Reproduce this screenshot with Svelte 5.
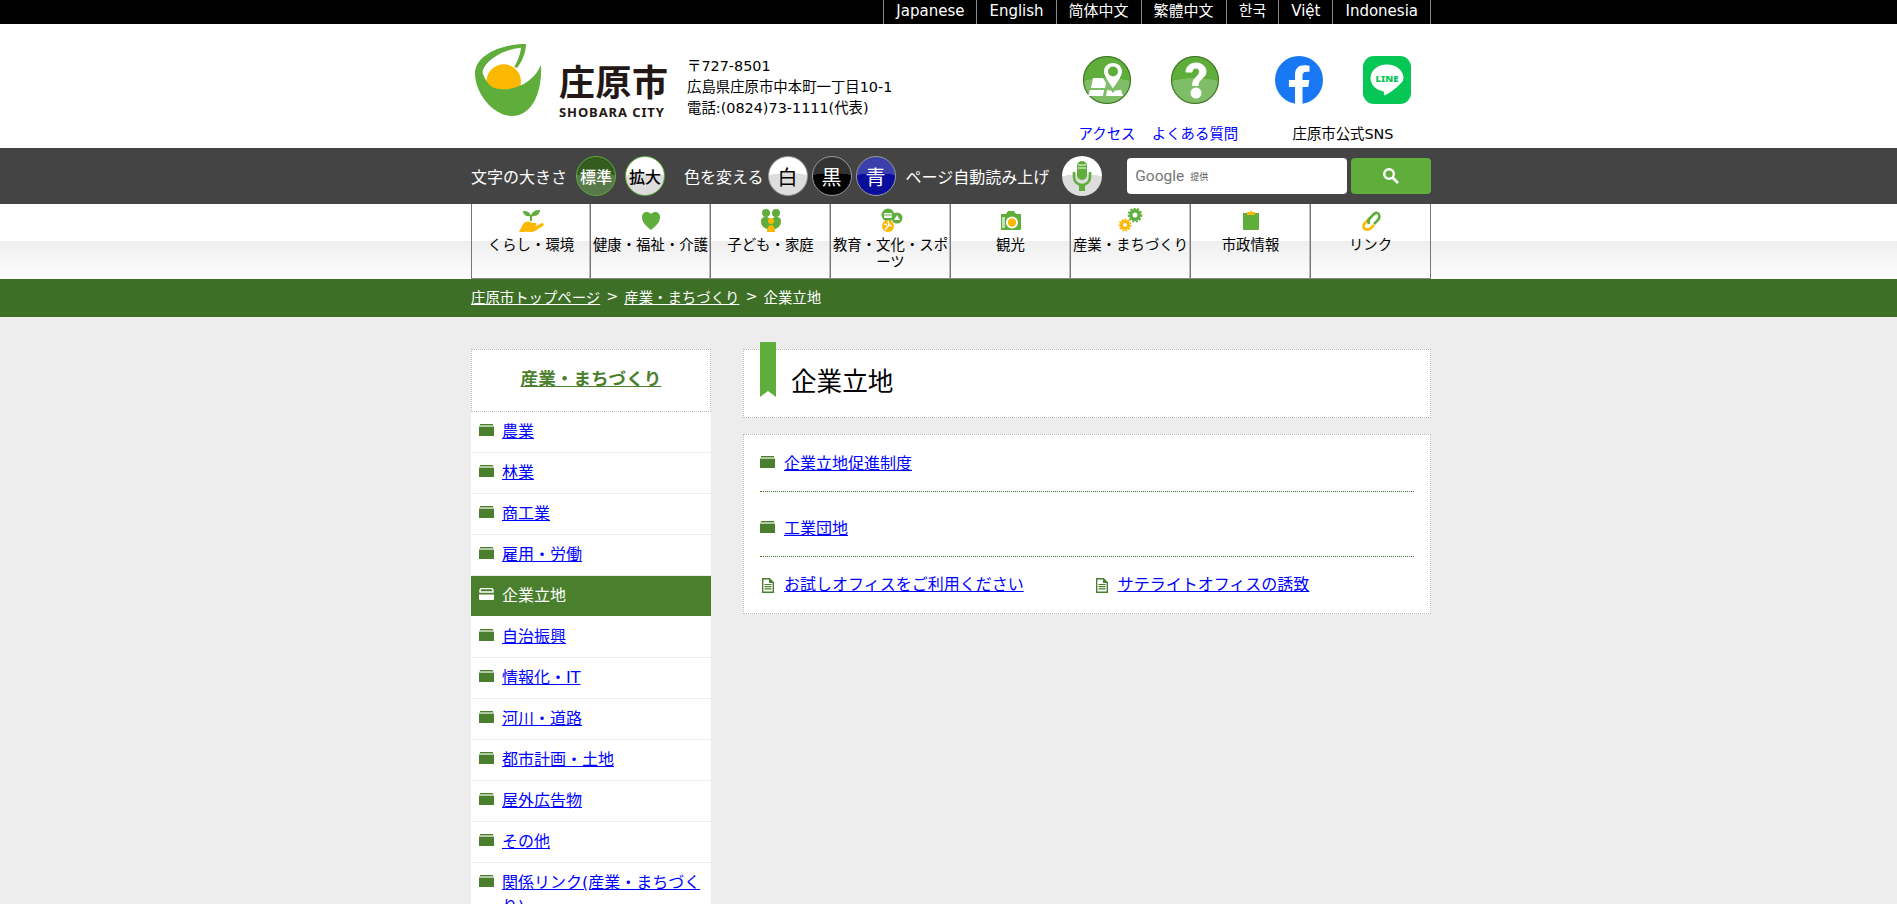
<script>
	const langs = ['Japanese', 'English', '简体中文', '繁體中文', '한국', 'Việt', 'Indonesia'];
	const nav = [
		{ id: 'life', label: 'くらし・環境' },
		{ id: 'health', label: '健康・福祉・介護' },
		{ id: 'kids', label: '子ども・家庭' },
		{ id: 'edu', label: '教育・文化・スポーツ' },
		{ id: 'camera', label: '観光' },
		{ id: 'gear', label: '産業・まちづくり' },
		{ id: 'clip', label: '市政情報' },
		{ id: 'link', label: 'リンク' }
	];
	const side = ['農業', '林業', '商工業', '雇用・労働', '企業立地', '自治振興', '情報化・IT', '河川・道路', '都市計画・土地', '屋外広告物', 'その他', '関係リンク(産業・まちづくり)'];
</script>

{#snippet folder(white)}
	<svg class="folder" width="15" height="12" viewBox="0 0 15 12">
		{#if white}
			<path d="M2 .5h11l1 1.500v2H1V2z" fill="none" stroke="#fff" stroke-width="1.400"/>
			<path d="M0 6.500h15V11a1 1 0 0 1-1 1H1a1 1 0 0 1-1-1z" fill="#fff"/>
		{:else}
			<path d="M1 0h13v1.500H1z" fill="#4a7f2d"/>
			<path d="M0 1.500h15v1.500H0z" fill="#b5cca8"/>
			<path d="M0 3h15v9H0z" fill="#4a7f2d"/>
		{/if}
	</svg>
{/snippet}

{#snippet doc()}
	<svg class="doc" width="12" height="15" viewBox="0 0 12 15">
		<path d="M.7.7h6.800l3.800 3.800v9.800H.7z" fill="#fff" stroke="#4a7f2d" stroke-width="1.400"/>
		<path d="M7 .7V5h4.500z" fill="#4a7f2d"/>
		<path d="M2.500 6.500h7M2.500 8.700h7M2.500 10.900h7" stroke="#4a7f2d" stroke-width="1.200"/>
	</svg>
{/snippet}

{#snippet navIcon(id)}
	<svg class="nav-icon" width="36" height="24" viewBox="0 0 36 24">
		{#if id === 'life'}
			<path d="M18 13V7" stroke="#5fad3b" stroke-width="2"/>
			<path d="M18 8C17 4 14 3 10 3c0 4 4 6 8 5zM18 8c1-5 5-6 9-6 0 4-4 7-9 6z" fill="#5fad3b"/>
			<path d="M6 24l4-8c3-3 6-3 9-1h4c1 1 0 3-1 3h-5 6l6-3c2 0 2 2 1 3l-8 5c-4 2-9 0-11 1z" fill="#fbb800"/>
		{:else if id === 'health'}
			<path d="M18 22C10 16 9 12 9 9c0-3 2-5 5-5 2 0 3 1 4 2 1-1 2-2 4-2 3 0 5 2 5 5 0 3-1 7-9 13z" fill="#5fad3b"/>
		{:else if id === 'kids'}
			<circle cx="13" cy="5" r="4" fill="#5fad3b"/><circle cx="23" cy="5" r="4" fill="#5fad3b"/>
			<path d="M8 13c0-3 2-4 5-4s3 2 5 2 2-2 5-2 5 1 5 4c0 5-3 8-10 9-7-1-10-4-10-9z" fill="#5fad3b"/>
			<circle cx="18" cy="13" r="3" fill="#fbb800"/>
			<path d="M14 24c0-5 2-7 4-7s4 2 4 7z" fill="#fbb800"/>
		{:else if id === 'edu'}
			<circle cx="15" cy="7" r="6.500" fill="#5fad3b"/><path d="M11 5h8v5h-8z" fill="#fff"/><path d="M11 7h8" stroke="#5fad3b"/>
			<circle cx="24" cy="10" r="5.500" fill="#5fad3b"/><path d="M24 7l3 5h-6z" fill="#fff"/>
			<circle cx="15" cy="18" r="6" fill="#fbb800"/><path d="M15 13l1 4 3 1M16 17l-4 5M14 17l-3-1" stroke="#fff" stroke-width="1.400" fill="none"/>
		{:else if id === 'camera'}
			<path d="M8 6h5l2-3h6l2 3h5v15a1 1 0 0 1-1 1H8z" fill="#5fad3b"/>
			<path d="M9 9h3v11H9z" fill="#c5e0b6"/>
			<circle cx="19" cy="14.500" r="6" fill="#fff"/><circle cx="19" cy="14.500" r="4.200" fill="#fbb800"/>
		{:else if id === 'gear'}
			<circle cx="22" cy="7" r="4.200" fill="none" stroke="#5fad3b" stroke-width="3.400"/>
			<circle cx="22" cy="7" r="6.400" fill="none" stroke="#5fad3b" stroke-width="2" stroke-dasharray="2 1.500"/>
			<circle cx="12" cy="17" r="3.500" fill="none" stroke="#fbb800" stroke-width="3"/>
			<circle cx="12" cy="17" r="5.500" fill="none" stroke="#fbb800" stroke-width="1.800" stroke-dasharray="1.800 1.300"/>
		{:else if id === 'clip'}
			<path d="M10 5h16v16a1 1 0 0 1-1 1H11a1 1 0 0 1-1-1z" fill="#5fad3b"/>
			<path d="M14 4h3l1-2 1 2h3v3h-8z" fill="#fbb800"/>
		{:else}
			<path d="M17 10l-5 5c-2 2-2 5 0 6s4 1 6-1l3-3" fill="none" stroke="#fbb800" stroke-width="2.600"/>
			<path d="M16 16c-1-2-1-4 1-6l4-4c2-2 5-1 5 1 1 2 0 4-2 6l-3 3" fill="none" stroke="#5fad3b" stroke-width="2.600"/>
		{/if}
	</svg>
{/snippet}

<div class="page">
	<div class="topbar">
		<ul class="langs">
			{#each langs as lang}
				<li>{lang}</li>
			{/each}
		</ul>
	</div>

	<header class="inner header">
		<div class="logo">
			<svg width="70" height="76" viewBox="30 36 210 228">
				<circle cx="116" cy="155" r="52" fill="#fbb800"/>
				<path d="M183 42C110 42 30 75 30 130c0 60 55 128 110 128 60 0 92-68 88-154-16 41-58 72-113 74-30 0-47-8-62-48-2-30 55-72 115-77-3 25-13 45-20 57l8 4c16-21 27-46 27-74z" fill="#5fad3b"/>
			</svg>
			<div class="logo-text">
				<span class="logo-ja">庄原市</span>
				<span class="logo-en">SHOBARA CITY</span>
			</div>
		</div>
		<address class="addr">
			<span>〒727-8501</span>
			<span>広島県庄原市中本町一丁目10-1</span>
			<span>電話:(0824)73-1111(代表)</span>
		</address>
		<div class="hlinks">
			<a class="hlink access" href="#a">
				<span class="gloss">
					<svg width="48" height="48" viewBox="0 0 48 48">
						<path d="M30 7c-5.500 0-9 4-9 8.500 0 5 6 12 9 17 3-5 9-12 9-17C39 11 35.500 7 30 7z" fill="#fff"/>
						<circle cx="30" cy="15.500" r="5" fill="#5fad3b"/>
						<path d="M10 22h10l3 5-1 5H8zM7 34h14l-1 6H5zM24 34l4 .5 2 2.500 2-2.500 6-.5 2 6H23z" fill="#fff"/>
					</svg>
				</span>
				<span class="hlabel">アクセス</span>
			</a>
			<a class="hlink faq" href="#f">
				<span class="gloss">
					<svg width="48" height="48" viewBox="0 0 48 48">
						<path d="M15 16c0-5 4-9 10-9s10 4 10 8.500c0 7-8 7-8 14h-5.500c0-8 7-9 7-14 0-2-1.500-3.500-3.500-3.500s-3.800 1.500-4 4z" fill="#fff" stroke="#fff"/>
						<circle cx="25" cy="37" r="5.500" fill="#fff"/>
					</svg>
				</span>
				<span class="hlabel">よくある質問</span>
			</a>
			<div class="sns">
				<div class="sns-icons">
					<svg width="48" height="48" viewBox="0 0 48 48">
						<circle cx="24" cy="24" r="24" fill="#1877f2"/>
						<path d="M33.300 31l1-7H27.500v-4.500c0-1.900 1-3.800 4-3.800h3v-6s-2.800-.5-5.400-.5c-5.500 0-9.100 3.300-9.100 9.400V24h-6.100v7H20v16.700a24 24 0 0 0 7.500 0V31z" fill="#fff"/>
					</svg>
					<svg width="48" height="48" viewBox="0 0 48 48">
						<rect width="48" height="48" rx="11" fill="#06c755"/>
						<path d="M24 8.500c-9.500 0-16.500 6-16.500 13.500 0 6.500 5.200 12 12.500 13.200 1.500.3 1 1.800.8 3-.1 1 .4 1.500 1.700.9 2-1 9-5.300 12.500-9 3-2.800 5.500-5 5.500-8.100C40.500 14.500 33.500 8.500 24 8.500z" fill="#fff"/>
						<text class="line-text" x="24" y="25.500" text-anchor="middle">LINE</text>
					</svg>
				</div>
				<span class="hlabel dark">庄原市公式SNS</span>
			</div>
		</div>
	</header>

	<div class="toolbar">
		<div class="inner tools">
			<span class="tool-label">文字の大きさ</span>
			<span class="ball ball-std">標準</span>
			<span class="ball ball-big">拡大</span>
			<span class="tool-label color-label">色を変える</span>
			<span class="ball ball-white">白</span>
			<span class="ball ball-black">黒</span>
			<span class="ball ball-blue">青</span>
			<span class="tool-label read-label">ページ自動読み上げ</span>
			<span class="ball ball-mic">
				<svg width="40" height="40" viewBox="0 0 40 40">
					<rect x="15" y="5" width="10" height="19" rx="5" fill="#5fad3b"/>
					<path d="M16 9h8M16 12h8" stroke="#fff" stroke-width="1"/>
					<path d="M12 16v5c0 5 4 8 8 8s8-3 8-8v-5" fill="none" stroke="#5fad3b" stroke-width="2.600"/>
					<path d="M17 29h6v6h-6z" fill="#5fad3b"/>
				</svg>
			</span>
			<div class="search">
				<div class="search-box"><span class="goog">Google</span><span class="teikyo">提供</span></div>
				<button class="search-btn" aria-label="検索">
					<svg width="18" height="18" viewBox="0 0 18 18">
						<circle cx="7" cy="7" r="4.800" fill="none" stroke="#fff" stroke-width="2.400"/>
						<path d="M10.500 10.500L16 16" stroke="#fff" stroke-width="2.600"/>
					</svg>
				</button>
			</div>
		</div>
	</div>

	<nav class="gnav">
		<ul class="inner gnav-list">
			{#each nav as item}
				<li>
					{@render navIcon(item.id)}
					<span>{item.label}</span>
				</li>
			{/each}
		</ul>
	</nav>

	<div class="crumbs">
		<div class="inner crumb-row">
			<a href="#t">庄原市トップページ</a><span class="sep">&gt;</span><a href="#s">産業・まちづくり</a><span class="sep">&gt;</span><span>企業立地</span>
		</div>
	</div>

	<div class="inner columns">
		<aside class="sidebar">
			<h2 class="side-title"><a href="#s">産業・まちづくり</a></h2>
			<ul class="side-list">
				{#each side as name}
					<li class:active={name === '企業立地'}>
						{@render folder(name === '企業立地')}
						{#if name === '企業立地'}
							<span>{name}</span>
						{:else}
							<a href="#n">{name}</a>
						{/if}
					</li>
				{/each}
			</ul>
		</aside>

		<main class="main">
			<div class="heading">
				<svg class="ribbon" width="16" height="55" viewBox="0 0 16 55"><path d="M0 0h16v55l-8-6-8 6z" fill="#5fad3b"/></svg>
				<h1>企業立地</h1>
			</div>
			<div class="box">
				<div class="row">{@render folder(false)}<a href="#p">企業立地促進制度</a></div>
				<div class="row">{@render folder(false)}<a href="#k">工業団地</a></div>
				<div class="docs">
					<div class="doc-item">{@render doc()}<a href="#o">お試しオフィスをご利用ください</a></div>
					<div class="doc-item">{@render doc()}<a href="#r">サテライトオフィスの誘致</a></div>
				</div>
			</div>
		</main>
	</div>
</div>

<style>
	:global(body) {
		margin: 0;
		background: #ededed;
	}
	.page {
		height: 904px;
		overflow: hidden;
		font-family: "DejaVu Sans", "Noto Sans CJK JP", sans-serif;
		font-size: 16px;
		color: #000;
	}
	.inner {
		width: 960px;
		margin-left: 471px;
		box-sizing: border-box;
	}
	a {
		color: #00f;
	}
	ul {
		list-style: none;
		margin: 0;
		padding: 0;
	}

	.topbar {
		background: #000;
		height: 24px;
	}
	.langs {
		display: flex;
		justify-content: flex-end;
		width: 960px;
		margin-left: 471px;
		height: 24px;
		border-right: 1px solid #888;
		box-sizing: border-box;
	}
	.langs li {
		border-left: 1px solid #888;
		color: #fff;
		font-size: 15px;
		line-height: 22px;
		padding: 0 12px;
	}

	.header {
		display: flex;
		height: 124px;
		position: relative;
	}
	.header::before {
		content: '';
		position: absolute;
		top: 0;
		bottom: 0;
		left: -471px;
		width: 1897px;
		background: #fff;
	}
	.header > * {
		position: relative;
	}
	.logo {
		display: flex;
		width: 216px;
		padding: 18px 0 0 4px;
		box-sizing: border-box;
		color: #231815;
	}
	.logo svg {
		flex-shrink: 0;
	}
	.logo-text {
		display: flex;
		flex-direction: column;
		margin-left: 14px;
		padding-top: 19px;
	}
	.logo-ja {
		font-family: "Noto Sans CJK JP", sans-serif;
		font-size: 36px;
		font-weight: 700;
		line-height: 38px;
		white-space: nowrap;
		letter-spacing: 0.5px;
	}
	.logo-en {
		font-family: "Noto Sans", sans-serif;
		font-size: 13px;
		font-weight: 700;
		line-height: 16px;
		white-space: nowrap;
		letter-spacing: 0.9px;
		margin-top: 5px;
	}
	.addr {
		display: flex;
		flex-direction: column;
		font-style: normal;
		font-size: 14.400px;
		line-height: 21px;
		padding-top: 32px;
		width: 370px;
		box-sizing: border-box;
	}
	.hlinks {
		display: flex;
		align-items: flex-start;
		padding-top: 32px;
	}
	.hlink {
		display: flex;
		flex-direction: column;
		align-items: center;
		text-decoration: none;
		width: 88px;
		flex-shrink: 0;
	}
	.access {
		margin-left: 6px;
	}
	.gloss {
		display: block;
		width: 48px;
		height: 48px;
		border-radius: 50%;
		box-sizing: border-box;
		box-shadow: inset 0 0 0 1px #3e6f26;
		background: radial-gradient(ellipse 50px 26px at 50% 100%, #7fbd67 99%, #5fad3b 100%);
	}
	.gloss svg {
		display: block;
	}
	.hlabel {
		font-size: 14.400px;
		line-height: 20px;
		margin-top: 20px;
		white-space: nowrap;
	}
	.hlabel.dark {
		color: #000;
	}
	.sns {
		display: flex;
		flex-direction: column;
		align-items: center;
		margin-left: 36px;
	}
	.sns-icons {
		display: flex;
		gap: 40px;
	}
	.line-text {
		font-family: "Noto Sans", sans-serif;
		font-size: 9.500px;
		font-weight: 900;
		fill: #06c755;
	}

	.toolbar {
		background: #444;
		height: 56px;
	}
	.tools {
		display: flex;
		align-items: center;
		height: 56px;
		color: #fff;
	}
	.tool-label {
		font-size: 16px;
		white-space: nowrap;
	}
	.color-label {
		margin-left: 19px;
		margin-right: 4px;
	}
	.read-label {
		margin-left: 6px;
		margin-right: 13px;
	}
	.ball {
		display: flex;
		align-items: center;
		justify-content: center;
		width: 40px;
		height: 40px;
		border-radius: 50%;
		box-sizing: border-box;
		flex-shrink: 0;
		font-size: 20px;
		border: 1px solid #999;
		color: #000;
		background: radial-gradient(ellipse 46px 22px at 50% 100%, #ddd 99%, #fff 100%);
		margin-right: 4px;
	}
	.ball-std, .ball-big {
		font-size: 16px;
		font-weight: 500;
		border-color: #5fad3b;
		margin-left: 9px;
		margin-right: 0;
	}
	.ball-std {
		color: #fff;
		background: radial-gradient(ellipse 46px 22px at 50% 100%, #587a4b 99%, #335c1e 100%);
	}
	.ball-black {
		color: #fff;
		background: radial-gradient(ellipse 46px 22px at 50% 100%, #000 99%, #333 100%);
	}
	.ball-blue {
		color: #fff;
		background: radial-gradient(ellipse 46px 22px at 50% 100%, #0b0e9c 99%, #3a3fac 100%);
	}
	.ball-mic {
		border: none;
		margin-right: 0;
	}
	.ball-mic svg {
		display: block;
	}
	.search {
		display: flex;
		gap: 4px;
		margin-left: 25px;
	}
	.search-box {
		display: flex;
		align-items: center;
		width: 220px;
		height: 36px;
		box-sizing: border-box;
		padding-left: 8px;
		background: #fff;
		border-radius: 4px;
	}
	.goog {
		font-family: Roboto, sans-serif;
		font-size: 15.500px;
		color: #757575;
	}
	.teikyo {
		font-size: 9px;
		color: #555;
		margin-left: 6px;
	}
	.search-btn {
		display: flex;
		align-items: center;
		justify-content: center;
		width: 80px;
		height: 36px;
		padding: 0;
		border: none;
		border-radius: 4px;
		background: #5fad3b;
	}

	.gnav {
		height: 75px;
		background: linear-gradient(#fff 37px, #eee 37px, #fff 75px);
	}
	.gnav-list {
		display: flex;
		height: 75px;
		border-right: 1px solid #777;
		border-bottom: 1px solid #888;
	}
	.gnav-list li {
		width: 120px;
		flex-shrink: 0;
		box-sizing: border-box;
		border-left: 1px solid #777;
		box-shadow: -1px 0 0 #bbb;
		display: flex;
		flex-direction: column;
		align-items: center;
		padding-top: 4px;
		font-size: 14.400px;
		line-height: 17px;
		text-align: center;
	}
	.gnav-list li:first-child {
		width: 119px;
		box-shadow: none;
	}
	.nav-icon {
		display: block;
		flex-shrink: 0;
		margin-bottom: 5px;
	}

	.crumbs {
		background: #3e6f26;
		height: 38px;
	}
	.crumb-row {
		display: flex;
		align-items: center;
		height: 34px;
		font-size: 14.400px;
		color: #fff;
	}
	.crumb-row a {
		color: #fff;
	}
	.sep {
		margin: 0 6px;
	}

	.columns {
		display: flex;
		gap: 32px;
		padding-top: 32px;
	}
	.sidebar {
		width: 240px;
		flex-shrink: 0;
	}
	.side-title {
		margin: 0;
		height: 63px;
		padding-bottom: 6px;
		display: flex;
		align-items: center;
		justify-content: center;
		box-sizing: border-box;
		background: #fff;
		border: 1px dotted #bbb;
		font-size: 17.600px;
		font-weight: 700;
	}
	.side-title a {
		color: #4a7f2d;
	}
	.side-list li {
		display: flex;
		gap: 8px;
		background: #fff;
		padding: 8px;
		box-sizing: border-box;
		min-height: 41px;
		border-bottom: 1px solid #eee;
		line-height: 24px;
	}
	.side-list li.active {
		background: #4a7f2d;
		color: #fff;
		border-bottom-color: #fff;
	}
	.folder {
		flex-shrink: 0;
		margin-top: 4px;
		display: block;
	}
	.doc {
		flex-shrink: 0;
		display: block;
		margin-top: 5px;
	}

	.main {
		width: 688px;
		flex-shrink: 0;
	}
	.heading {
		position: relative;
		height: 69px;
		box-sizing: border-box;
		background: #fff;
		border: 1px dotted #bbb;
		display: flex;
		align-items: center;
		padding: 0 0 9px 47px;
	}
	.ribbon {
		position: absolute;
		left: 16px;
		top: -8px;
	}
	.heading h1 {
		margin: 0;
		font-size: 25.600px;
		font-weight: 400;
	}
	.box {
		margin-top: 16px;
		height: 180px;
		box-sizing: border-box;
		background: #fff;
		border: 1px dotted #bbb;
		padding: 0 16px;
	}
	.row {
		display: flex;
		gap: 9px;
		height: 65px;
		padding-top: 6px;
		align-items: center;
		box-sizing: border-box;
		border-bottom: 1px dotted #3e6f26;
	}
	.row:first-child {
		height: 57px;
		padding-top: 0;
		padding-bottom: 2px;
	}
	.row .folder {
		margin-top: 0;
	}
	.docs {
		display: flex;
		height: 56px;
		align-items: center;
	}
	.doc-item {
		display: flex;
		gap: 10px;
		width: 336px;
		padding-left: 2px;
		box-sizing: border-box;
		line-height: 24px;
	}
	.doc-item:first-child {
		width: 350px;
	}
</style>
